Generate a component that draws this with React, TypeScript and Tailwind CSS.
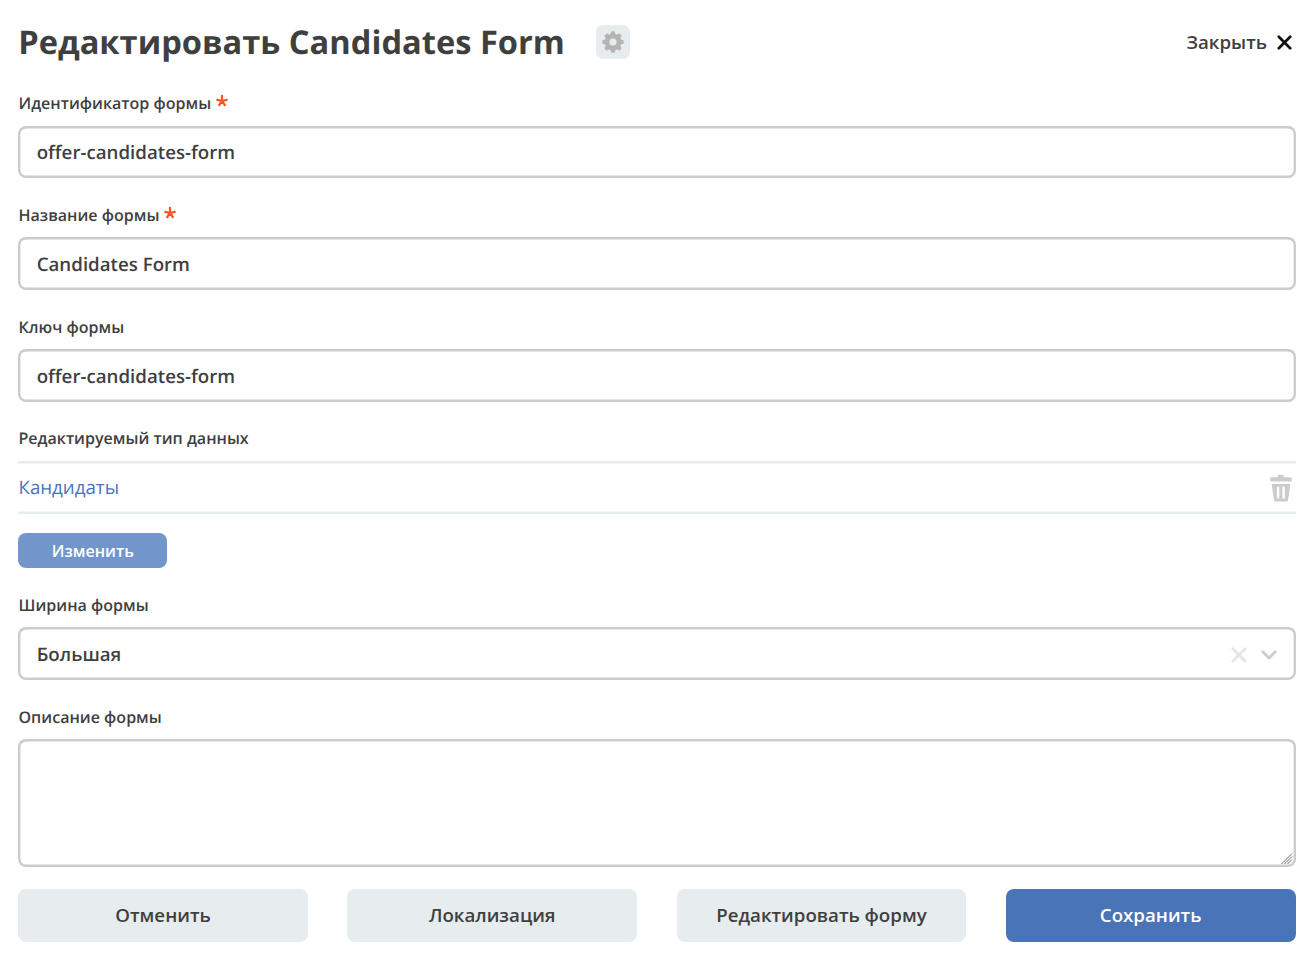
import type { ReactNode } from 'react';

function Label({ children, required }: { children: ReactNode; required?: boolean }) {
  return (
    <div className="flex h-6 items-center pl-[0.3px] text-[16.05px] font-semibold leading-6 whitespace-nowrap text-[#3f3f3f]">
      <span>{children}</span>
      {required && (
        <svg className="ml-[5px] -mt-1 h-3 w-3" viewBox="0 0 12 12" fill="none" stroke="#fa5420" strokeWidth="2.2">
          <path d="M6 6V0M6 6L0.4 4.6M6 6L11.6 4.6M6 6L2.6 10.9M6 6L9.4 10.9" />
        </svg>
      )}
    </div>
  );
}

const fieldBox = 'rounded-[8px] bg-white shadow-[inset_0_0_0_2.4px_#cccccc]';

function TextField({ label, value, required }: { label: string; value: string; required?: boolean }) {
  return (
    <div className="flex h-[111.8px] flex-col">
      <Label required={required}>{label}</Label>
      <div className={`${fieldBox} mt-[10.5px] flex h-[52.6px] shrink-0 items-center px-[18.5px] pt-[2.5px] text-[18.7px] font-semibold text-[#3f3f3f]`}>
        {value}
      </div>
    </div>
  );
}

const toothAngles = [0, 45, 90, 135];

function GearIcon() {
  return (
    <svg className="h-[22px] w-[22px]" viewBox="0 0 24 24" fill="none" stroke="#b4b4b4">
      <circle cx="12" cy="12" r="6.5" strokeWidth="5.2" />
      {toothAngles.map((angle) => (
        <path
          key={angle}
          d="M9.900 3.800L10.700 1.100H13.300L14.100 3.800ZM9.900 20.200L10.700 22.900H13.300L14.100 20.200Z"
          fill="#b4b4b4"
          strokeWidth="1.4"
          strokeLinejoin="round"
          transform={`rotate(${angle} 12 12)`}
        />
      ))}
    </svg>
  );
}

function TrashIcon() {
  return (
    <svg className="mt-[1px] h-[28px] w-[22px]" viewBox="0 0 22 28" fill="#cccccc">
      <path d="M8.5 0.8h4.6q0.7 0 0.7 0.7v1.7h6.8q1.2 0 1.2 1.2v2.3q0 0.7-.7.7H0.9q-.7 0-.7-.7V4.400q0-1.200 1.200-1.200h6.400V1.500q0-.7.7-.7z" />
      <path fillRule="evenodd" d="M2.200 10h17.600q.6 0 .5.600l-2.300 15.600q-.2 1.400-1.500 1.400H5.600q-1.300 0-1.500-1.400L1.700 10.600q-.1-.6.500-.6zM8.100 12.400q-1.200 0-1.200 1.200v10q0 1.200 1.200 1.200t1.200-1.200v-10q0-1.200-1.200-1.200zM13.600 12.400q-1.200 0-1.200 1.200v10q0 1.200 1.200 1.200t1.200-1.200v-10q0-1.200-1.200-1.200z" />
    </svg>
  );
}

function FooterButton({ children, primary }: { children: ReactNode; primary?: boolean }) {
  return (
    <button
      type="button"
      className={`flex h-[53px] items-center justify-center rounded-[8px] text-[18.7px] font-semibold ${
        primary ? 'bg-[#4a74b8] text-white' : 'bg-[#e7ecee] text-[#3f3f3f]'
      }`}
    >
      {children}
    </button>
  );
}

export default function App() {
  return (
    <main className="flex h-[978px] w-[1314px] flex-col bg-white pr-[18.500px] pl-[18.200px] font-['Open_Sans',sans-serif] [text-rendering:geometricPrecision]">
      <header className="flex h-[91px] shrink-0 items-start pt-[24.500px]">
        <h1 className="-mt-px text-[32.650px] leading-[35px] font-bold whitespace-nowrap text-[#3f3f3f]">Редактировать Candidates Form</h1>
        <button type="button" aria-label="Настройки" className="ml-[31px] flex h-[34px] w-[34px] items-center justify-center rounded-[7px] bg-[#e7ecee]">
          <GearIcon />
        </button>
        <button type="button" className="mr-[3.500px] ml-auto flex h-[35px] items-center gap-[10px] text-[18.700px] font-semibold text-[#3f3f3f]">
          Закрыть
          <svg className="h-[15px] w-[15px]" viewBox="0 0 15 15" fill="none" stroke="#111" strokeWidth="2.700" strokeLinecap="round">
            <path d="M1.800 1.800l11.400 11.400M13.200 1.800L1.800 13.200" />
          </svg>
        </button>
      </header>

      <TextField label="Идентификатор формы" value="offer-candidates-form" required />
      <TextField label="Название формы" value="Candidates Form" required />
      <TextField label="Ключ формы" value="offer-candidates-form" />

      <section className="flex h-[166.500px] flex-col">
        <Label>Редактируемый тип данных</Label>
        <div className="mt-[10.500px] flex h-[53px] shrink-0 items-center justify-between pr-1 shadow-[inset_0_2.400px_0_#e7ecee,inset_0_-2.400px_0_#e7ecee]">
          <a className="pt-[1.500px] pl-[0.300px] text-[18.700px] text-[#4a74b8]">Кандидаты</a>
          <TrashIcon />
        </div>
        <button type="button" className="mt-[19.500px] flex h-[35px] w-[149.300px] shrink-0 items-center justify-center rounded-[8px] bg-[#7296cc] pt-px text-[16.050px] font-semibold text-white">
          Изменить
        </button>
      </section>

      <section className="flex h-[111.800px] flex-col">
        <Label>Ширина формы</Label>
        <div className={`${fieldBox} mt-[10.500px] flex h-[52.600px] shrink-0 items-center pr-[18.500px] pl-[18.500px] text-[18.700px] font-semibold text-[#3f3f3f]`}>
          <span className="grow pt-[2.500px]">Большая</span>
          <svg className="mt-[2px] mr-[14px] h-4 w-4" viewBox="0 0 16 16" fill="none" stroke="#e6e6e6" strokeWidth="2.800" strokeLinecap="round">
            <path d="M1.800 1.800l12.400 12.400M14.200 1.800L1.800 14.200" />
          </svg>
          <svg className="mt-[3px] h-[10px] w-4" viewBox="0 0 16 10" fill="none" stroke="#cccccc" strokeWidth="2.900" strokeLinecap="round" strokeLinejoin="round">
            <path d="M1.800 1.800L8 8l6.200-6.200" />
          </svg>
        </div>
      </section>

      <section className="flex h-[183.900px] flex-col">
        <Label>Описание формы</Label>
        <div className={`${fieldBox} mt-[10.500px] flex h-[128px] shrink-0 items-end justify-end p-[2.500px]`}>
          <svg className="h-3 w-3" viewBox="0 0 12 12" fill="none" stroke="#555" strokeWidth="0.900">
            <path d="M0.500 11L11 0.500M3.500 11L11 3.500M6.500 11L11 6.500" />
          </svg>
        </div>
      </section>

      <footer className="grid shrink-0 grid-cols-4 gap-[39.500px]">
        <FooterButton>Отменить</FooterButton>
        <FooterButton>Локализация</FooterButton>
        <FooterButton>Редактировать форму</FooterButton>
        <FooterButton primary>Сохранить</FooterButton>
      </footer>
    </main>
  );
}
